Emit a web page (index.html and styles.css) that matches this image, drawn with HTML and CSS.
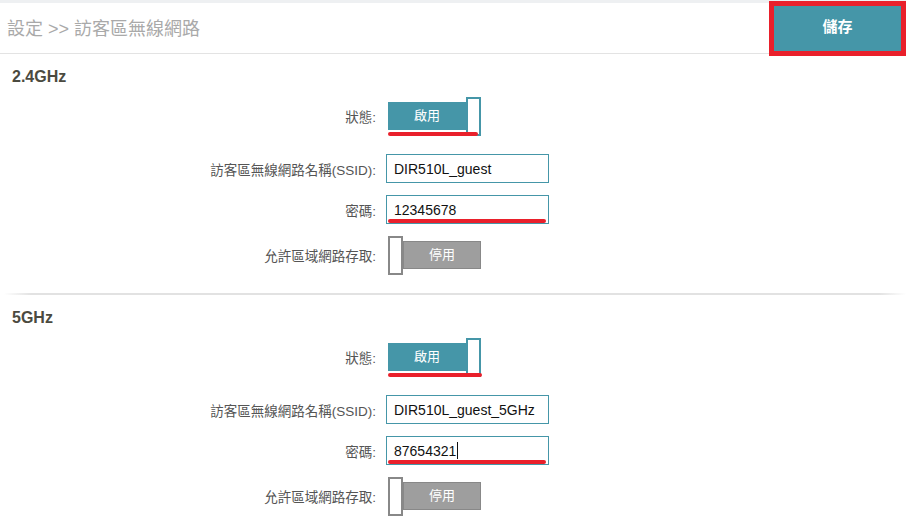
FILE: index.html
```html
<!DOCTYPE html>
<html>
	<head>
		<meta charset="utf-8"/>
		<title>訪客區無線網路</title>
		<link rel="stylesheet" href="styles.css">
	</head>
	<body>
		<div class="top">
			<div class="crumb">設定 &gt;&gt; 訪客區無線網路</div>
			<div class="save">儲存</div>
		</div>

		<div class="band">
			<div class="band-title">2.4GHz</div>
			<div class="row row-status">
				<div class="label">狀態:</div>
				<div class="toggle on">
					<span class="bar">啟用</span>
					<span class="knob"></span>
					<span class="mark"></span>
				</div>
			</div>
			<div class="row row-ssid">
				<div class="label">訪客區無線網路名稱(SSID):</div>
				<div class="field">DIR510L_guest</div>
			</div>
			<div class="row row-pwd">
				<div class="label">密碼:</div>
				<div class="field">12345678<span class="mark"></span></div>
			</div>
			<div class="row row-lan">
				<div class="label">允許區域網路存取:</div>
				<div class="toggle off">
					<span class="knob"></span>
					<span class="bar">停用</span>
				</div>
			</div>
		</div>

		<div class="line"></div>

		<div class="band">
			<div class="band-title">5GHz</div>
			<div class="row row-status">
				<div class="label">狀態:</div>
				<div class="toggle on">
					<span class="bar">啟用</span>
					<span class="knob"></span>
					<span class="mark wide"></span>
				</div>
			</div>
			<div class="row row-ssid">
				<div class="label">訪客區無線網路名稱(SSID):</div>
				<div class="field">DIR510L_guest_5GHz</div>
			</div>
			<div class="row row-pwd">
				<div class="label">密碼:</div>
				<div class="field">87654321<span class="caret"></span><span class="mark"></span></div>
			</div>
			<div class="row row-lan">
				<div class="label">允許區域網路存取:</div>
				<div class="toggle off">
					<span class="knob"></span>
					<span class="bar">停用</span>
				</div>
			</div>
		</div>
	</body>
</html>
```

FILE: styles.css
```css
/*去除默认样式*/
* {
	margin: 0;
	padding: 0;
	box-sizing: border-box;
}

body {
	background-color: #fff;
	font-family: "Liberation Sans", "Noto Sans CJK TC", sans-serif;
	color: #555;
}

/*顶部*/
.top {
	display: flex;
	align-items: flex-start;
	height: 54px;
	border-top: 3px solid #eef0f2;
	border-bottom: 1px solid #e3e3e3;
}

.crumb {
	flex: 1;
	padding-left: 7px;
	margin-top: 14px;
	font-size: 18px;
	line-height: 24px;
	color: #a9a9a9;
}

.save {
	width: 127px;
	height: 45px;
	margin: 3px 5px 0 0;
	background-color: #4596a8;
	outline: 5px solid #e9202b;

	font-size: 15px;
	font-weight: bold;
	line-height: 42px;
	text-align: center;
	color: #fff;
}

/*频段*/
.band {
	padding-top: 13px;
}

.band-title {
	padding-left: 12px;
	font-size: 16px;
	font-weight: bold;
	line-height: 20px;
	color: #4b4a40;
}

.row {
	display: grid;
	grid-template-columns: 376px 1fr;
	column-gap: 10px;
	align-items: center;
}

.row-status {
	height: 40px;
	margin-top: 9px;
}

.row-ssid {
	height: 29px;
	margin-top: 18px;
}

.row-pwd {
	height: 29px;
	margin-top: 12px;
}

.row-lan {
	height: 40px;
	margin-top: 11px;
}

.label {
	text-align: right;
	font-size: 13.5px;
	color: #555;
}

/*输入框*/
.field {
	position: relative;
	width: 163px;
	height: 29px;
	padding-left: 7px;
	border: 1px solid #4596a8;
	font-size: 14px;
	line-height: 29px;
	color: #111;
}

.field .mark {
	position: absolute;
	left: 1px;
	right: 2px;
	bottom: 0;
	height: 4px;
	border-radius: 2px;
	background-color: #e9202b;
}

.caret {
	display: inline-block;
	width: 1px;
	height: 17px;
	margin-left: 1px;
	vertical-align: -3px;
	background-color: #111;
}

/*开关*/
.toggle {
	position: relative;
	display: flex;
	align-items: center;
	width: 93px;
	height: 40px;
	margin-left: 2px;
}

.toggle .bar {
	width: 78px;
	height: 28px;
	font-size: 13px;
	line-height: 27px;
	text-align: center;
	color: #fff;
}

.toggle .knob {
	width: 15px;
	height: 39px;
	background-color: #fff;
}

.on .bar {
	background-color: #4596a8;
}

.on .knob {
	border: 2px solid #4596a8;
}

.off .bar {
	background-color: #9e9e9e;
	border: 1px solid #888;
	line-height: 25px;
}

.off .knob {
	border: 2px solid #888;
}

.toggle .mark {
	position: absolute;
	left: 0;
	top: 36px;
	width: 90px;
	height: 4px;
	border-radius: 2px;
	background-color: #e9202b;
}

.toggle .wide {
	width: 94px;
}

/*分隔线*/
.line {
	height: 2px;
	margin: 18px 0 0 4px;
	background: linear-gradient(to right, rgba(220, 220, 220, 0), #e2e2e2 3%, #e2e2e2 97%, rgba(220, 220, 220, 0));
}
```
